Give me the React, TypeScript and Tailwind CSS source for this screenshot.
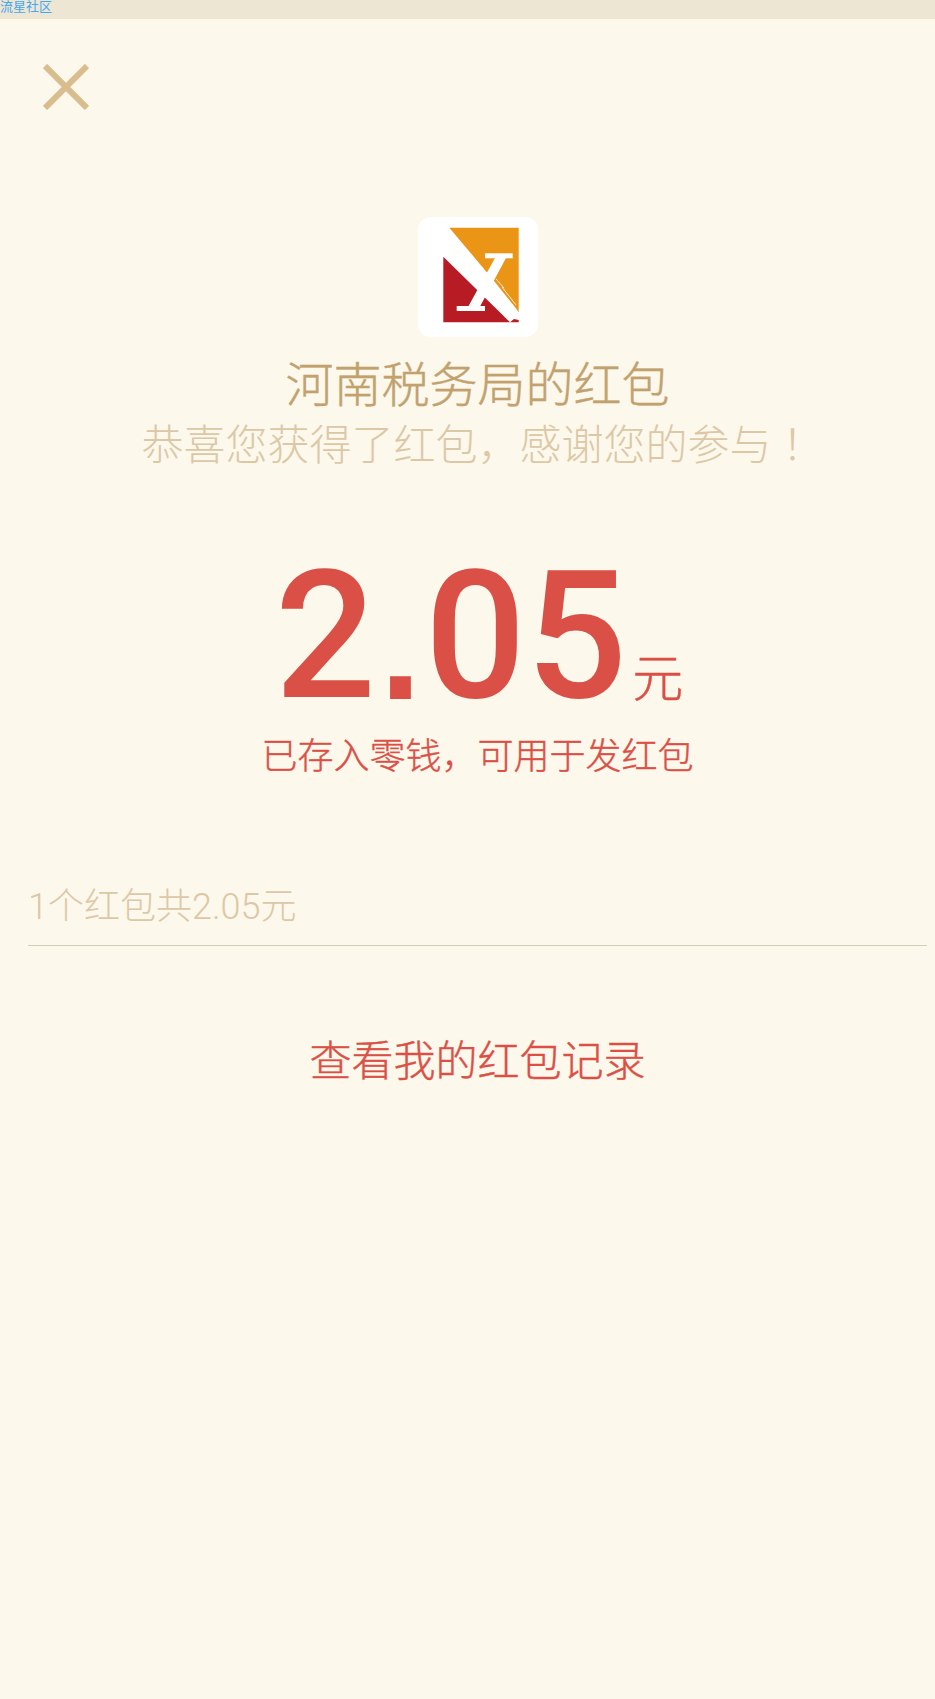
import React from "react";

const sans = "font-['Liberation_Sans','Noto_Sans_CJK_SC',sans-serif]";

const Logo = () => (
  <svg viewBox="0 0 120 120" className="h-[120px] w-[120px]">
    <rect width="120" height="120" rx="13" fill="#fff" />
    <polygon points="31.3,10.7 100.7,10.7 100.7,95 75.3,63" fill="#ea9516" />
    <polygon points="25.3,39.7 25.3,105.3 92,105.3" fill="#b71c25" />
    <polygon points="92,105.3 100.7,105.3 100.7,103 96,102" fill="#b71c25" />
    {/* brush marks */}
    <g stroke="#fff" fill="none" opacity="0.8">
      <path d="M42 25l11 13M78 62l8 9M84 70l14 18M88 80l10 12" strokeWidth="1" />
    </g>
    {/* serif mark */}
    <g fill="#fff">
      <rect x="67" y="36.3" width="27.7" height="5" />
      <rect x="38.7" y="89" width="28.3" height="5" />
      <polygon points="77,41 88,41 62,89.5 50.3,89.5" />
    </g>
  </svg>
);

export default function App() {
  return (
    <div className={`${sans} min-h-[1699px] w-full bg-[#fcf8ec]`}>
      <div className="h-[19px] bg-[#ede6d3] text-[13px] leading-[13px] text-[#45a6f2]">流星社区</div>

      <div className="pl-[43px] pt-[45px]">
        <svg viewBox="0 0 46 46" className="h-[46px] w-[46px]">
          <path d="M2 2l42 42M44 2L2 44" stroke="#d9bd8f" strokeWidth="6" fill="none" />
        </svg>
      </div>

      <div className="mt-[107px] flex flex-col items-center pl-[20px]">
        <Logo />
        <h1 className="mt-[21px] text-[48px] leading-[56px] font-light text-[#c1a26f] [-webkit-text-stroke:0.4px_#c1a26f]">河南税务局的红包</h1>
        <p className="mt-[2px] text-[42px] leading-[52px] font-light text-[#dcc8a6]">
          {"恭喜您获得了红包\uFF0C感谢您的参与"}
          <span className="font-['Noto_Sans_CJK_TC',sans-serif]">{"\uFF01"}</span>
        </p>

        <div className="mt-[69px] flex h-[190px] items-baseline pl-[3px] text-[#db5046]">
          <span className="font-['Roboto',sans-serif] text-[178px] leading-[190px] font-medium">
            2<span className="font-['Liberation_Sans',sans-serif] text-[176px] font-normal [-webkit-text-stroke:4px_#db5046]">.</span>05
          </span>
          <span className="ml-[5px] text-[51px] leading-none font-light [-webkit-text-stroke:0.4px_#db5046]">元</span>
        </div>
        <p className="mt-[4px] text-[36px] leading-[44px] font-light text-[#db5046] [-webkit-text-stroke:0.4px_#db5046]">{"已存入零钱\uFF0C可用于发红包"}</p>
      </div>

      <div className="mt-[107px] ml-[28px] w-[899px] border-b border-[#d5ccb9] pb-[17px] font-['Roboto','Noto_Sans_CJK_SC',sans-serif] text-[36px] leading-[42px] font-light text-[#dcc8a6]">
        1个红包共2.05元
      </div>

      <p className="mt-[90px] pl-[20px] text-center text-[42px] leading-[52px] font-light text-[#db5046] [-webkit-text-stroke:0.4px_#db5046]">查看我的红包记录</p>
    </div>
  );
}
